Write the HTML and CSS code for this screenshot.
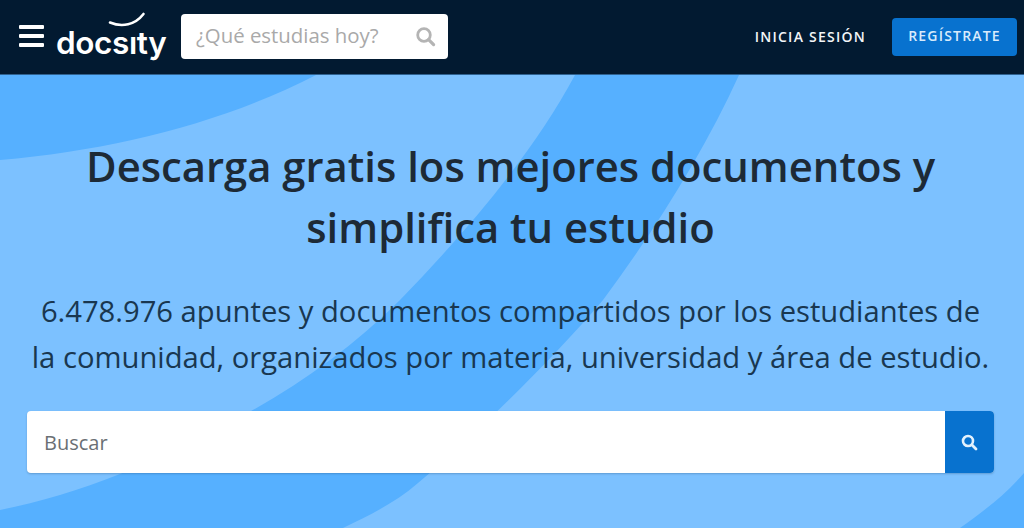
FILE: index.html
```html
<!DOCTYPE html>
<html lang="es">
<head>
  <meta charset="UTF-8">
  <title>Docsity</title>
  <link rel="stylesheet" href="styles.css">
</head>
<body>
  <div id="header">
    <div class="menu"><span></span><span></span><span></span></div>
    <a class="logo" href="#">
      <svg class="smile" width="40" height="18" viewBox="0 0 40 18"><path d="M2 10.5C14 15.5 27 13 35.5 2" fill="none" stroke="#fff" stroke-width="2.6" stroke-linecap="round"/></svg>
      docsıty
    </a>
    <div class="top_search">
      <span class="top_placeholder">¿Qué estudias hoy?</span>
      <svg width="21" height="21" viewBox="0 0 21 21"><circle cx="9" cy="9" r="6.3" fill="none" stroke="#b4b4b4" stroke-width="2.8"/><path d="M13.6 13.6L18.6 18.6" stroke="#b4b4b4" stroke-width="3.2" stroke-linecap="round"/></svg>
    </div>
    <a class="login" href="#">INICIA SESIÓN</a>
    <a class="signup" href="#">REGÍSTRATE</a>
  </div>
  <div id="content">
    <svg class="waves" width="1024" height="454" viewBox="0 75 1024 454">
      <path d="M0 75H316C225 122 115 150 0 160Z"/>
      <path d="M575 75H739C705 150 655 230 603 300C550 362 480 430 418 483C395 503 368 516 343 528H0V510C40 502 80 490 120 474C225 430 320 380 400 300C470 228 535 150 575 75Z"/>
      <path d="M1024 473V528H960C985 510 1005 495 1024 473Z"/>
    </svg>
    <h1>Descarga gratis los mejores documentos y<br>simplifica tu estudio</h1>
    <p>6.478.976 apuntes y documentos compartidos por los estudiantes de<br>la comunidad, organizados por materia, universidad y área de estudio.</p>
    <div class="search">
      <span class="search_text">Buscar</span>
      <div class="search_button">
        <svg width="17" height="17" viewBox="0 0 17 17"><circle cx="7" cy="7" r="5" fill="none" stroke="#e3f1fd" stroke-width="2.6"/><path d="M10.8 10.8L15 15" stroke="#e3f1fd" stroke-width="2.8" stroke-linecap="round"/></svg>
      </div>
    </div>
  </div>
</body>
</html>
```
FILE: styles.css
```css
html, body {
	margin:0px;
	padding:0px;
	height:100%;
	overflow:hidden;
}

body {
	font-family:"Open Sans","Liberation Sans",sans-serif;
	background:#7cc1ff;
}

a {
	text-decoration:none;
}

#header {
	height:74px;
	background:#021a31;
	border-bottom:1px solid #2f6291;
	display:flex;
	align-items:center;
	box-sizing:content-box;
	padding:0px 7px 0px 19px;
}

.menu {
	width:25px;
	display:flex;
	flex-direction:column;
	gap:5px;
	margin-right:12px;
	margin-top:-2px;
}

.menu span {
	height:4px;
	background:#fff;
	border-radius:1px;
}

.logo {
	position:relative;
	width:125px;
	color:#fff;
	font-family:"Inter","Open Sans",sans-serif;
	font-size:31.5px;
	font-weight:600;
	letter-spacing:-0.4px;
	line-height:36px;
	margin-top:12px;
}

.smile {
	position:absolute;
	left:52px;
	top:-13px;
}

.top_search {
	width:267px;
	height:45px;
	margin-top:-1px;
	background:#fff;
	border-radius:4px;
	display:flex;
	align-items:center;
	justify-content:space-between;
	box-sizing:border-box;
	padding:0px 12px 0px 15px;
}

.top_placeholder {
	font-size:20.4px;
	color:#a9a9a9;
	margin-top:-4px;
}

.login {
	margin-left:auto;
	color:#f2f5f8;
	font-size:14px;
	font-weight:600;
	letter-spacing:1.25px;
	margin-top:-2px;
}

.signup {
	margin-left:26px;
	width:125px;
	height:38px;
	line-height:36px;
	text-align:center;
	background:#0872cf;
	border-radius:4px;
	color:#d8ebfc;
	font-size:14px;
	font-weight:600;
	letter-spacing:1.2px;
}

#content {
	position:relative;
	height:453px;
	box-sizing:border-box;
	padding:60px 30px 0px 27px;
	text-align:center;
}

.waves {
	position:absolute;
	left:0px;
	top:0px;
	fill:#56b0ff;
}

h1 {
	position:relative;
	margin:0px;
	font-size:41.8px;
	font-weight:600;
	line-height:61px;
	color:#1d2a36;
}

p {
	position:relative;
	margin:31px 0px 0px 0px;
	font-size:29.2px;
	line-height:46px;
	color:#193750;
}

.search {
	position:relative;
	height:62px;
	margin-top:31px;
	background:#fff;
	border-radius:4px;
	display:flex;
	align-items:center;
	justify-content:space-between;
	text-align:left;
	overflow:hidden;
	box-shadow:0px 1px 2px rgba(30,70,110,0.3);
}

.search_text {
	margin-left:17px;
	font-size:20px;
	color:#6a6f74;
}

.search_button {
	width:49px;
	height:62px;
	background:#0872cf;
	display:flex;
	align-items:center;
	justify-content:center;
	padding-right:1px;
	box-sizing:border-box;
}
```
